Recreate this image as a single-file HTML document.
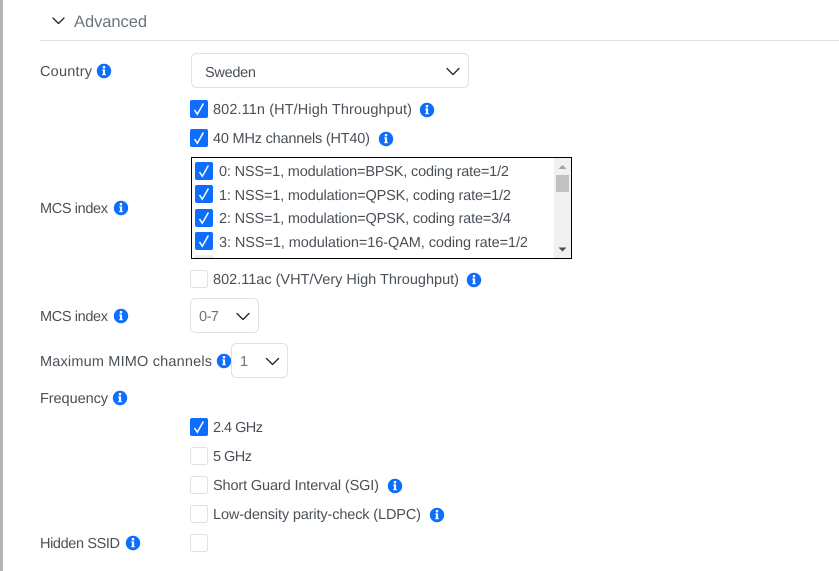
<!DOCTYPE html>
<html><head><meta charset="utf-8"><style>
html,body{margin:0;padding:0;background:#fff;width:839px;height:571px;overflow:hidden}
svg{display:block}
text{font-family:"Liberation Sans",sans-serif;font-size:14.5px;fill:#495057;text-rendering:geometricPrecision}
.box{fill:#fff;stroke:#dee2e6;stroke-width:1}
.chev{fill:none;stroke:#212529;stroke-width:1.3;stroke-linecap:round;stroke-linejoin:round}
</style></head><body>
<svg width="839" height="571" viewBox="0 0 839 571" xmlns="http://www.w3.org/2000/svg">
<defs>
<g id="i"><circle cx="0" cy="0" r="7.200" fill="#0d6efd"/><rect x="-1.100" y="-1.600" width="2.200" height="5.600" fill="#fff"/><rect x="-1.900" y="-1.600" width="1.500" height="1" fill="#fff"/><rect x="-1.900" y="3.200" width="3.800" height="1" fill="#fff"/><circle cx="0" cy="-3.800" r="1.300" fill="#fff"/></g>
<g id="c"><rect x="0" y="0" width="18" height="18" rx="2" fill="#0d6efd"/><path d="M4.500 10L7.300 14.200L13.400 3.500" fill="none" stroke="#fff" stroke-width="1.500"/></g>
<g id="u"><rect x="0.500" y="0.500" width="17" height="17" rx="2" class="box"/></g>
</defs>
<rect x="0" y="0" width="3" height="571" fill="#b5b5b8"/>
<path class="chev" d="M53 18L58.500 23.500L64 18"/>
<text x="74" y="27" style="font-size:16.500px;fill:#6c757d" textLength="73" lengthAdjust="spacing">Advanced</text>
<rect x="40" y="40" width="799" height="1" fill="#dee2e6"/>

<text x="40" y="76" textLength="52">Country</text><use href="#i" x="104" y="71"/>
<rect x="191.500" y="53.500" width="277" height="34" rx="5" class="box"/>
<text x="205" y="77" textLength="51">Sweden</text>
<path class="chev" d="M447 68.500L453 74.500L459 68.500"/>

<use href="#c" x="190" y="100"/><text x="213" y="114" textLength="199">802.11n (HT/High Throughput)</text><use href="#i" x="427" y="110"/>
<use href="#c" x="190" y="129"/><text x="213" y="143" textLength="157">40 MHz channels (HT40)</text><use href="#i" x="386" y="139"/>

<rect x="191.500" y="157.500" width="380" height="101" fill="#fff" stroke="#000" stroke-width="1"/>
<use href="#c" x="195" y="162"/><text x="219" y="176" textLength="290">0: NSS=1, modulation=BPSK, coding rate=1/2</text>
<use href="#c" x="195" y="185"/><text x="219" y="200" textLength="292">1: NSS=1, modulation=QPSK, coding rate=1/2</text>
<use href="#c" x="195" y="209"/><text x="219" y="223" textLength="292">2: NSS=1, modulation=QPSK, coding rate=3/4</text>
<use href="#c" x="195" y="232"/><text x="219" y="247" textLength="309">3: NSS=1, modulation=16-QAM, coding rate=1/2</text>
<rect x="196" y="256" width="16" height="2" fill="#fff" stroke="#dee2e6" stroke-width="1"/>
<rect x="192" y="258" width="379" height="1" fill="#000"/>
<rect x="554" y="158" width="17" height="100" fill="#f1f1f1"/>
<rect x="556" y="175" width="13" height="17" fill="#c1c1c1"/>
<path d="M558.500 169L562.500 165L566.500 169Z" fill="#a3a3a3"/>
<path d="M558.500 247.500L566.500 247.500L562.500 251.500Z" fill="#505050"/>

<use href="#u" x="190" y="270"/><text x="213" y="284" textLength="246">802.11ac (VHT/Very High Throughput)</text><use href="#i" x="474" y="280"/>
<text x="40" y="213" textLength="68">MCS index</text><use href="#i" x="121" y="208"/>

<text x="40" y="321" textLength="68">MCS index</text><use href="#i" x="121" y="316"/>
<rect x="190.500" y="298.500" width="68" height="34" rx="5" class="box"/>
<text x="199" y="321" textLength="20" style="fill:#6c757d">0-7</text>
<path class="chev" d="M237 313.500L243 319.500L249 313.500"/>

<text x="40" y="366" textLength="172">Maximum MIMO channels</text><use href="#i" x="224" y="361"/>
<rect x="231.500" y="343.500" width="56" height="34" rx="5" class="box"/>
<text x="240" y="366" style="fill:#6c757d">1</text>
<path class="chev" d="M266.500 358.500L272.500 364.500L278.500 358.500"/>

<text x="40" y="403" textLength="68">Frequency</text><use href="#i" x="120" y="398"/>
<use href="#c" x="190" y="418"/><text x="213" y="432" textLength="50">2.4 GHz</text>
<use href="#u" x="190" y="447"/><text x="213" y="461" textLength="39">5 GHz</text>
<use href="#u" x="190" y="476"/><text x="213" y="490" textLength="166">Short Guard Interval (SGI)</text><use href="#i" x="395" y="486"/>
<use href="#u" x="190" y="505"/><text x="213" y="519" textLength="208">Low-density parity-check (LDPC)</text><use href="#i" x="437" y="515"/>
<text x="40" y="548" textLength="80">Hidden SSID</text><use href="#i" x="133" y="543"/>
<use href="#u" x="190" y="534"/>
</svg>
</body></html>
